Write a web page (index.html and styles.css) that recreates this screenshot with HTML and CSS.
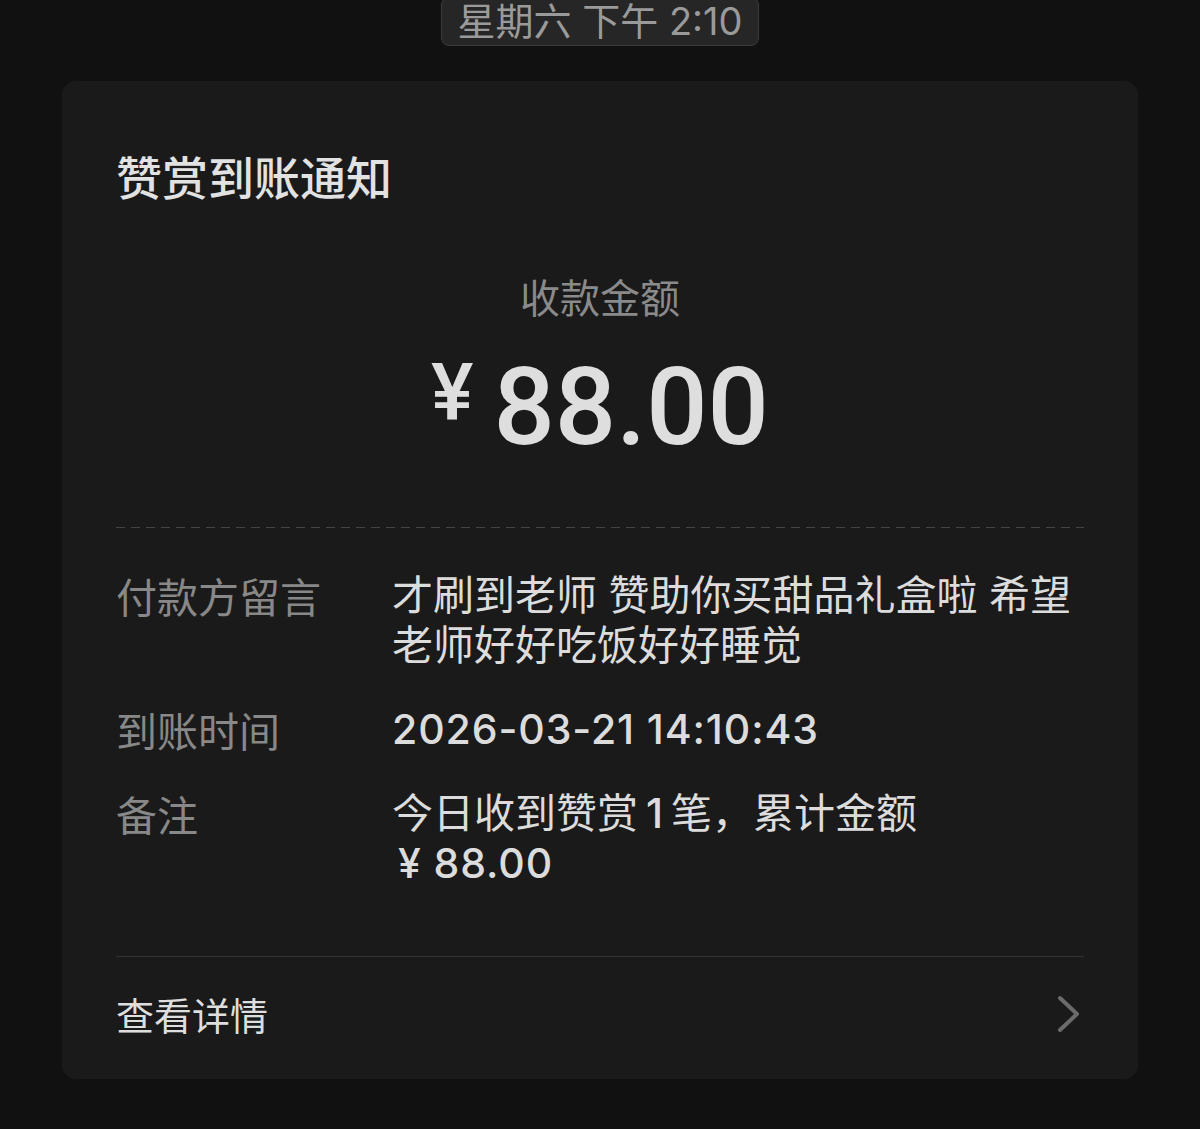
FILE: index.html
```html
<!DOCTYPE html>
<html lang="zh-CN">
<head>
  <meta charset="UTF-8" />
  <meta name="viewport" content="width=device-width, initial-scale=1.0"/>
  <title>赞赏到账通知</title>

  <link rel="stylesheet" href="styles.css">

</head>
<body>
  <div class="time-row">
    <span class="time-pill">星期六 下午 2:10</span>
  </div>

  <div class="card">
    <h1 class="title">赞赏到账通知</h1>

    <div class="amount-label">收款金额</div>
    <div class="amount">
      <span class="yen">¥</span>
      <span class="num">88.00</span>
    </div>

    <div class="dashed"></div>

    <div class="rows">
      <div class="label">付款方留言</div>
      <div class="value">才刷到老师 赞助你买甜品礼盒啦 希望老师好好吃饭好好睡觉</div>

      <div class="label">到账时间</div>
      <div class="value latin">2026-03-21 14:10:43</div>

      <div class="label">备注</div>
      <div class="value">今日收到赞赏<span class="latin one">1</span>笔，累计金额<br><span class="latin small-amount">¥ 88.00</span></div>
    </div>

    <div class="footer">
      <span>查看详情</span>
      <svg class="chevron" width="24" height="40" viewBox="0 0 24 40">
        <path d="M3 4 L20 20 L3 36" fill="none" stroke="#6b6b6b" stroke-width="4" stroke-linecap="round" stroke-linejoin="round"/>
      </svg>
    </div>
  </div>
</body>
</html>
```

FILE: styles.css
```css
body {
  margin: 0;
  background-color: #111111;
  font-family: "Inter", "Noto Sans CJK SC", sans-serif;
  color: #dcdcdc;
}

.time-row {
  display: flex;
  justify-content: center;
}

.time-pill {
  margin-top: -3px;
  padding: 0 16px 1px;
  line-height: 46px;
  font-size: 38px;
  color: #9a9a9a;
  background-color: #262626;
  border: 1px solid #3a3a3a;
  border-radius: 8px;
}

.card {
  margin: 35px 62px 0;
  padding: 64px 54px 40px;
  background-color: #1a1a1a;
  border-radius: 14px;
}

.title {
  margin: 0;
  font-family: "Noto Sans CJK SC", sans-serif;
  font-size: 46px;
  font-weight: 500;
  line-height: 60px;
  color: #e2e2e2;
}

.amount-label {
  margin-top: 66px;
  text-align: center;
  font-family: "Noto Sans CJK SC", sans-serif;
  font-size: 40px;
  line-height: 50px;
  color: #8a8a8a;
}

.amount {
  margin-top: 32px;
  display: flex;
  justify-content: center;
  align-items: flex-start;
  font-family: "Roboto", sans-serif;
  font-weight: 500;
  color: #dedede;
}

.yen {
  font-size: 80px;
  line-height: 80px;
  margin-right: 20px;
}

.num {
  font-size: 108px;
  line-height: 108px;
}

.dashed {
  margin-top: 66px;
  height: 1px;
  background-image: repeating-linear-gradient(to right, #444 0, #444 9px, transparent 9px, transparent 15px);
}

.rows {
  margin-top: 42px;
  display: grid;
  grid-template-columns: 276px 1fr;
  row-gap: 34px;
  font-size: 41px;
  line-height: 50px;
}

.label {
  font-family: "Noto Sans CJK SC", sans-serif;
  color: #888888;
}

.value {
  color: #dcdcdc;
}

.latin {
  font-weight: 500;
  letter-spacing: 0.9px;
}

.one {
  margin: 0 7px 0 8px;
}

.small-amount {
  margin-left: 6px;
}

.footer {
  margin-top: 68px;
  padding-top: 32px;
  border-top: 1px solid #333333;
  display: flex;
  justify-content: space-between;
  align-items: center;
  font-family: "Noto Sans CJK SC", sans-serif;
  font-size: 38px;
  line-height: 50px;
  color: #dedede;
}

.chevron {
  margin-right: 3px;
}
```
